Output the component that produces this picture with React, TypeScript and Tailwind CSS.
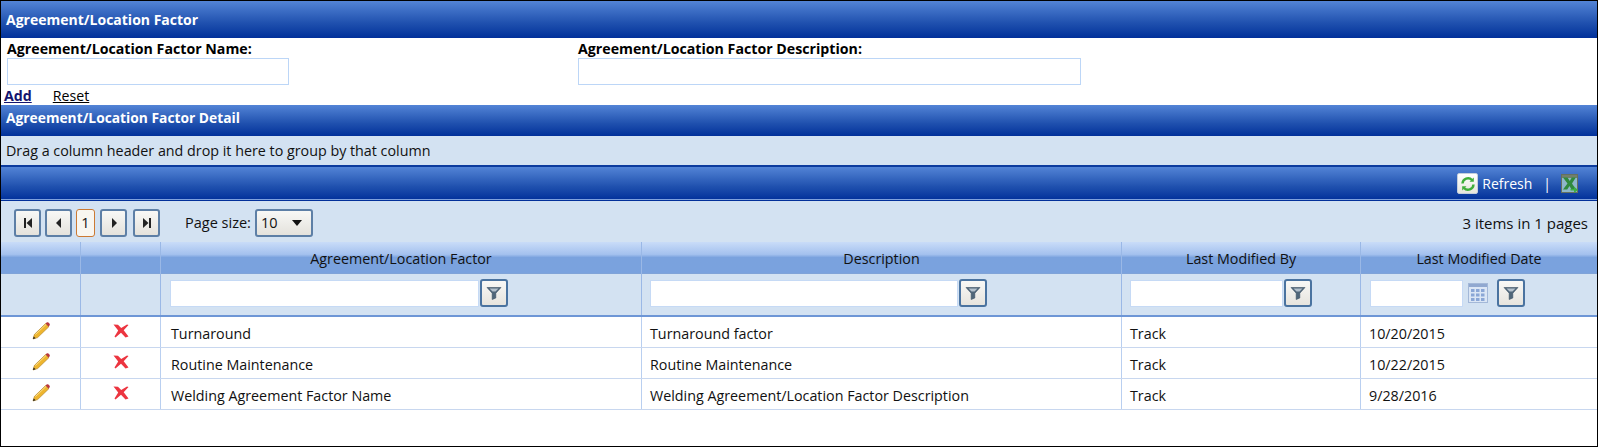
import type { ReactNode } from "react";

const GRID = "grid grid-cols-[80px_80px_481px_480px_239px_1fr]";

const ROWS = [
  { name: "Turnaround", description: "Turnaround factor", by: "Track", date: "10/20/2015" },
  { name: "Routine Maintenance", description: "Routine Maintenance", by: "Track", date: "10/22/2015" },
  {
    name: "Welding Agreement Factor Name",
    description: "Welding Agreement/Location Factor Description",
    by: "Track",
    date: "9/28/2016",
  },
];

function FunnelIcon() {
  return (
    <svg width="16" height="14" viewBox="0 0 16 14">
      <path d="M1 1.500h14L9.800 7.200V12l-3.600 1.500V7.200z" fill="#4f6679" stroke="#3a5064" strokeWidth="0.6" />
      <path d="M3.500 2.500h9L9.500 5.500h-3z" fill="#b3c0cc" />
    </svg>
  );
}

function PencilIcon() {
  return (
    <svg width="20" height="20" viewBox="0 0 20 20">
      <path d="M2 18l1.400-4.600L14.600 2.600l3.200 3.200L6.600 16.600z" fill="#eeb52e" stroke="#a9781a" strokeWidth="0.6" />
      <path d="M4.500 13.500L15.500 3" stroke="#fbe08a" strokeWidth="1" />
      <path d="M14.600 2.600l1-1c.8-.6 1.600-.5 2.200.1l.6.7c.6.7.6 1.500 0 2.200l-.6 1.200z" fill="#b8383f" />
      <path d="M2 18l.7-2.600 1.900 1.900z" fill="#222" />
    </svg>
  );
}

function CrossIcon() {
  return (
    <svg width="16" height="14" viewBox="0 0 16 14">
      <path d="M0.500 0.500L5 0.800 8.200 4 14 0.500l1.500.6-4.800 5.200L15.500 12.500 12.500 13.500 8 8.700 2.500 13.500 1.500 12.500 5.200 6.500z" fill="#ec3540" />
    </svg>
  );
}

function RefreshIcon() {
  return (
    <span className="flex h-[21px] w-[21px] items-center justify-center rounded-[2px] border border-[#c4cfdc] bg-gradient-to-b from-[#ffffff] to-[#e6e6dc]">
      <svg width="16" height="16" viewBox="0 0 16 16" fill="none" stroke="#3fae3a" strokeWidth="2.400">
        <path d="M2.500 7.500A5.500 5.500 0 0 1 12 4" />
        <path d="M13.500 8.500A5.500 5.500 0 0 1 4 12" />
        <path d="M9.500 5.800h4.300V1.500z" fill="#3fae3a" stroke="none" />
        <path d="M6.500 10.200H2.200v4.300z" fill="#3fae3a" stroke="none" />
      </svg>
    </span>
  );
}

function ExcelIcon() {
  return (
    <svg width="17" height="19" viewBox="0 0 17 19">
      <rect x="0.500" y="0.500" width="16" height="18" fill="#8fb7c9" stroke="#66705f" />
      <rect x="1" y="1" width="15" height="3" fill="#71806c" />
      <path d="M2 3.500h4.500L8.800 7l2-3.500h4L11 9.500l4 6h-4.500L8.500 12l-2.300 3.500H2L6.500 9.500z" fill="#2f8a3c" />
      <path d="M9.500 15h3.500v-2.500l4 3.500-4 3v-2.500H9.500z" fill="#3cb043" />
    </svg>
  );
}

function CalendarIcon() {
  return (
    <svg width="20" height="20" viewBox="0 0 20 20">
      <rect x="0.500" y="0.500" width="19" height="19" fill="#dbe6f5" stroke="#a3b8d8" />
      <rect x="1" y="1" width="18" height="3" fill="#90a8d0" />
      <g fill="#8ba7d6">
        <rect x="3" y="6" width="3.500" height="3" />
        <rect x="8" y="6" width="3.500" height="3" />
        <rect x="13" y="6" width="3.500" height="3" />
        <rect x="3" y="10.500" width="3.500" height="3" />
        <rect x="8" y="10.500" width="3.500" height="3" />
        <rect x="13" y="10.500" width="3.500" height="3" />
        <rect x="3" y="15" width="3.500" height="3" />
        <rect x="8" y="15" width="3.500" height="3" />
        <rect x="13" y="15" width="3.500" height="3" />
      </g>
    </svg>
  );
}

function PagerButton({ children, className = "w-[27px]" }: { children: ReactNode; className?: string }) {
  return (
    <button
      type="button"
      className={`flex h-[28px] items-center justify-center rounded-[3px] border-2 border-[#5d7fa6] bg-gradient-to-b from-[#f8f8f6] to-[#e4e2dc] ${className}`}
    >
      {children}
    </button>
  );
}

function FilterButton() {
  return (
    <button
      type="button"
      className="flex h-[28px] w-[28px] shrink-0 items-center justify-center rounded-[3px] border-2 border-[#4a73a0] bg-gradient-to-b from-[#f8f8f6] to-[#e6e4de]"
    >
      <FunnelIcon />
    </button>
  );
}

function FilterInput({ className }: { className: string }) {
  return <input type="text" className={`h-[27px] border border-[#c6daf5] bg-white ${className}`} />;
}

function Field({ label, inputClass, className }: { label: string; inputClass: string; className: string }) {
  return (
    <div className={className}>
      <label className="block h-[20px] text-[14.2px] leading-[21px] font-bold text-black">{label}</label>
      <input type="text" className={`block h-[27px] border border-[#bcd6f7] bg-white ${inputClass}`} />
    </div>
  );
}

export default function App() {
  return (
    <div className="h-[447px] w-[1598px] overflow-hidden border border-black bg-white font-['Open_Sans',sans-serif] text-[14.3px] text-[#111]">
      <div className="flex h-[37px] items-center bg-gradient-to-b from-[#5384d6] via-[#1f50ae] via-60% to-[#02309a] pl-[5px] text-[14px] font-bold text-white">
        Agreement/Location Factor
      </div>

      <div className="h-[67px]">
        <div className="flex">
          <Field label="Agreement/Location Factor Name:" inputClass="w-[282px]" className="ml-[6px] w-[571px]" />
          <Field label="Agreement/Location Factor Description:" inputClass="w-[503px]" className="" />
        </div>
        <div className="flex h-[20px] items-end pl-[3px] text-[14.2px] leading-[19px]">
          <a className="font-bold text-[#14146e] underline">Add</a>
          <a className="ml-[21px] text-black underline">Reset</a>
        </div>
      </div>

      <div className="flex h-[31px] items-start bg-gradient-to-b from-[#5384d6] via-[#1f50ae] via-60% to-[#02309a] pl-[5px] pt-[3px] text-[13.8px] font-bold text-white">
        Agreement/Location Factor Detail
      </div>

      <div className="flex h-[31px] items-center border-b-2 border-[#0c3b9e] bg-[#d3e2f2] pl-[5px] pt-[1px]">
        Drag a column header and drop it here to group by that column
      </div>

      <div className="flex h-[34px] items-center justify-end border-b border-[#02309a] bg-gradient-to-b from-[#5384d6] via-[#1f50ae] via-60% to-[#02309a] pr-[19px] text-[14px] text-white shadow-[inset_0_-1px_0_#7ea1dc]">
        <RefreshIcon />
        <span className="ml-[4px]">Refresh</span>
        <span className="ml-[11px] mr-[10px]">|</span>
        <ExcelIcon />
      </div>

      <div className="flex h-[41px] items-center bg-[#d3e2f2] pl-[13px] pr-[9px] pt-[3px] text-[14.5px]">
        <div className="flex items-center">
          <PagerButton>
            <svg width="10" height="12" viewBox="0 0 10 12" fill="#222">
              <rect x="1" y="1" width="2" height="10" />
              <path d="M9 1v10L3.500 6z" />
            </svg>
          </PagerButton>
          <PagerButton className="ml-[4px] w-[27px]">
            <svg width="8" height="12" viewBox="0 0 8 12" fill="#222">
              <path d="M6 1v10L1 6z" />
            </svg>
          </PagerButton>
          <button type="button" className="ml-[4px] h-[28px] w-[19px] rounded-[3px] border-[1.5px] border-[#cc7a33] bg-[#f8f6f0] text-center leading-[22px]">
            1
          </button>
          <PagerButton className="ml-[5px] w-[27px]">
            <svg width="8" height="12" viewBox="0 0 8 12" fill="#222">
              <path d="M2 1v10l5-5z" />
            </svg>
          </PagerButton>
          <PagerButton className="ml-[6px] w-[27px]">
            <svg width="10" height="12" viewBox="0 0 10 12" fill="#222">
              <path d="M1 1v10l5.500-5z" />
              <rect x="7" y="1" width="2" height="10" />
            </svg>
          </PagerButton>
        </div>
        <span className="ml-[25px]">Page size:</span>
        <div className="ml-[4px] flex h-[28px] w-[58px] items-center justify-between rounded-[3px] border-2 border-[#5d7fa6] bg-gradient-to-b from-[#f8f8f6] to-[#e4e2dc] pl-[4px] pr-[9px]">
          <span>10</span>
          <span className="h-0 w-0 border-x-[5px] border-t-[6px] border-x-transparent border-t-[#111]" />
        </div>
        <span className="ml-auto text-[15px]">3 items in 1 pages</span>
      </div>

      <div className={`${GRID} h-[31px] bg-gradient-to-b from-[#c9dcf8] via-[#a4c1ee] via-40% to-[#7aa2de] to-50% text-center leading-[33px]`}>
        <div className="border-r border-[#9ab8e6]" />
        <div className="border-r border-[#9ab8e6]" />
        <div className="border-r border-[#9ab8e6]">Agreement/Location Factor</div>
        <div className="border-r border-[#9ab8e6]">Description</div>
        <div className="border-r border-[#9ab8e6]">Last Modified By</div>
        <div>Last Modified Date</div>
      </div>

      <div className={`${GRID} h-[44px] border-y border-b-2 border-t-[#7fa3d8] border-b-[#6d96d6] bg-[#d3e2f2]`}>
        <div className="border-r border-[#9ab8e6]" />
        <div className="border-r border-[#9ab8e6]" />
        <div className="flex items-center border-r border-[#9ab8e6] pb-[3px] pl-[9px]">
          <FilterInput className="w-[309px]" />
          <div className="ml-[1px]"><FilterButton /></div>
        </div>
        <div className="flex items-center border-r border-[#9ab8e6] pb-[3px] pl-[8px]">
          <FilterInput className="w-[308px]" />
          <div className="ml-[1px]"><FilterButton /></div>
        </div>
        <div className="flex items-center border-r border-[#9ab8e6] pb-[3px] pl-[8px]">
          <FilterInput className="w-[153px]" />
          <div className="ml-[1px]"><FilterButton /></div>
        </div>
        <div className="flex items-center pb-[3px] pl-[9px]">
          <FilterInput className="w-[93px]" />
          <div className="ml-[5px]"><CalendarIcon /></div>
          <div className="ml-[9px]"><FilterButton /></div>
        </div>
      </div>

      {ROWS.map((row) => (
        <div key={row.name} className={`${GRID} h-[31px] border-b border-[#c8d7ef]`}>
          <div className="flex items-center justify-center border-r border-[#b9cff0] pb-[2px]">
            <PencilIcon />
          </div>
          <div className="flex items-center justify-center border-r border-[#b9cff0] pb-[2px]">
            <CrossIcon />
          </div>
          <div className="flex items-center border-r border-[#b9cff0] pl-[10px] pt-[3px]">{row.name}</div>
          <div className="flex items-center border-r border-[#b9cff0] pl-[8px] pt-[3px]">{row.description}</div>
          <div className="flex items-center border-r border-[#b9cff0] pl-[8px] pt-[3px]">{row.by}</div>
          <div className="flex items-center pl-[8px] pt-[3px]">{row.date}</div>
        </div>
      ))}
    </div>
  );
}
